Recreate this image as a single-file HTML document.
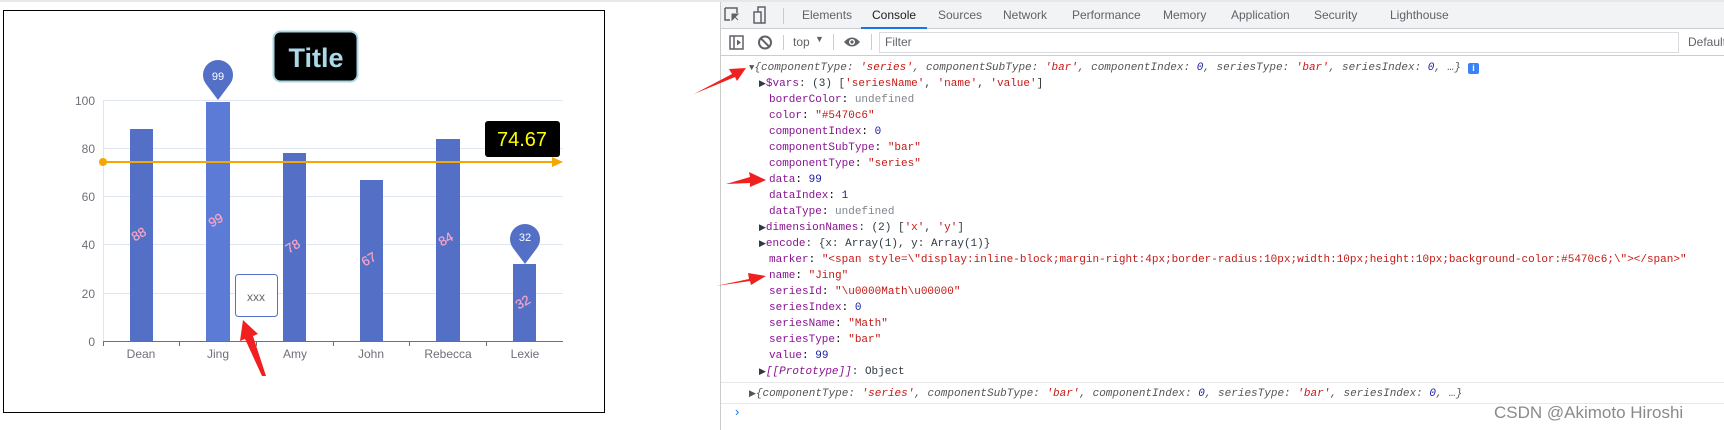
<!DOCTYPE html>
<html><head><meta charset="utf-8"><style>
*{margin:0;padding:0;box-sizing:border-box}
body{width:1724px;height:430px;background:#fff;position:relative;overflow:hidden;font-family:"Liberation Sans",sans-serif}
.a{position:absolute;white-space:nowrap}
.mono{font-family:"Liberation Mono",monospace;font-size:11px;line-height:16px}
.k{color:#881391}.s{color:#c41a16}.n{color:#1a1aa6}.u{color:#80868b}.g{color:#303942}
.tab{position:absolute;top:8px;font-size:12px;color:#5f6368}
</style></head><body>
<div class="a" style="left:0;top:0;width:1724px;height:2px;background:#e8e8e8"></div>
<svg class="a" style="left:0;top:0" width="720" height="430">
 <rect x="3.5" y="10.5" width="601" height="402" fill="#fff" stroke="#000"/>
 <g stroke="#e0e6f1" stroke-width="1">
  <line x1="103" x2="563" y1="100.5" y2="100.5"/><line x1="103" x2="563" y1="148.5" y2="148.5"/>
  <line x1="103" x2="563" y1="196.5" y2="196.5"/><line x1="103" x2="563" y1="244.5" y2="244.5"/>
  <line x1="103" x2="563" y1="293.5" y2="293.5"/><line x1="103.5" x2="103.5" y1="100" y2="341"/>
 </g>
 <g font-size="12" fill="#6e7079" text-anchor="end">
  <text x="95" y="105">100</text><text x="95" y="153">80</text><text x="95" y="201">60</text>
  <text x="95" y="249">40</text><text x="95" y="298">20</text><text x="95" y="346">0</text>
 </g>
 <g fill="#5470c6">
  <rect x="130" y="129" width="23" height="212"/><rect x="206" y="102" width="24" height="239" fill="#5b7bd6"/>
  <rect x="283" y="153" width="23" height="188"/><rect x="360" y="180" width="23" height="161"/>
  <rect x="436" y="139" width="24" height="202"/><rect x="513" y="264" width="23" height="77"/>
 </g>
 <line x1="103" x2="563" y1="341.5" y2="341.5" stroke="#6e7079"/>
 <g stroke="#6e7079"><line x1="103.5" x2="103.5" y1="341" y2="346"/><line x1="179.5" x2="179.5" y1="341" y2="346"/><line x1="256.5" x2="256.5" y1="341" y2="346"/><line x1="333.5" x2="333.5" y1="341" y2="346"/><line x1="409.5" x2="409.5" y1="341" y2="346"/><line x1="486.5" x2="486.5" y1="341" y2="346"/></g>
 <g font-size="12" fill="#6e7079" text-anchor="middle">
  <text x="141" y="358">Dean</text><text x="218" y="358">Jing</text><text x="295" y="358">Amy</text>
  <text x="371" y="358">John</text><text x="448" y="358">Rebecca</text><text x="525" y="358">Lexie</text>
 </g>
 <g font-size="13" fill="#f5a3c3" text-anchor="middle" stroke="#f5a3c3" stroke-width="0.3">
  <text transform="translate(141,238) rotate(-30)">88</text><text transform="translate(218,224) rotate(-30)">99</text>
  <text transform="translate(295,250) rotate(-30)">78</text><text transform="translate(371,263) rotate(-30)">67</text>
  <text transform="translate(448,243) rotate(-30)">84</text><text transform="translate(525,306) rotate(-30)">32</text>
 </g>
 <line x1="103" x2="560" y1="162" y2="162" stroke="#f5a700" stroke-width="2"/>
 <circle cx="103" cy="162" r="4" fill="#f5a700"/>
 <path d="M552 157 L563 162 L552 167 Z" fill="#f5a700"/>
 <rect x="485" y="121" width="75" height="36" rx="3" fill="#000"/>
 <text x="522" y="146" font-size="20" fill="#ffff00" text-anchor="middle">74.67</text>
 <path d="M218 100 L206 84 A15 15 0 1 1 230 84 Z" fill="#5470c6"/>
 <text x="218" y="80" font-size="11" fill="#fff" text-anchor="middle">99</text>
 <path d="M525 264 L513 248 A15 15 0 1 1 537 248 Z" fill="#5470c6"/>
 <text x="525" y="241" font-size="11" fill="#fff" text-anchor="middle">32</text>
 <rect x="273.5" y="31.5" width="84" height="50" rx="7" fill="#000" stroke="#a9d6e5" stroke-width="2"/>
 <text x="316" y="67" font-size="27" font-weight="bold" fill="#add8e6" text-anchor="middle">Title</text>
 <rect x="235.5" y="274.5" width="42" height="42" rx="3" fill="#fff" stroke="#5470c6"/>
 <text x="256" y="301" font-size="12" fill="#666" text-anchor="middle">xxx</text>
 <path d="M243 320 L258 334 L253 336 L266 376 L262 376 L245 339 L240 341 Z" fill="#f02020"/>
</svg>
<!-- devtools -->
<div class="a" style="left:720px;top:2px;width:1004px;height:428px;border-left:1px solid #ccc"></div>
<div class="a" style="left:721px;top:2px;width:1003px;height:27px;background:#f1f3f4;border-bottom:1px solid #cbcdd1"></div>
<svg class="a" style="left:724px;top:6px" width="50" height="20"><path d="M1 2h12v5M1 2v12h5" fill="none" stroke="#5f6368" stroke-width="1.5"/><path d="M8 8 L14 14 M8 8 l0 6 l6-6z" stroke="#5f6368" fill="#5f6368"/><rect x="30" y="6" width="7" height="11" fill="none" stroke="#5f6368" stroke-width="1.5"/><path d="M34 6 V1 h7 v16 h-4" fill="none" stroke="#5f6368" stroke-width="1.5"/></svg>
<div class="a" style="left:783px;top:8px;width:1px;height:16px;background:#ccc"></div>
<div class="tab" style="left:802px">Elements</div>
<div class="tab" style="left:872px;color:#202124">Console</div>
<div class="a" style="left:861px;top:27px;width:66px;height:2px;background:#1a73e8"></div>
<div class="tab" style="left:938px">Sources</div>
<div class="tab" style="left:1003px">Network</div>
<div class="tab" style="left:1072px">Performance</div>
<div class="tab" style="left:1163px">Memory</div>
<div class="tab" style="left:1231px">Application</div>
<div class="tab" style="left:1314px">Security</div>
<div class="tab" style="left:1390px">Lighthouse</div>
<div class="a" style="left:721px;top:29px;width:1003px;height:27px;background:#fff;border-bottom:1px solid #cbcdd1"></div>
<svg class="a" style="left:728px;top:33px" width="120" height="20"><rect x="2" y="3" width="13" height="13" fill="none" stroke="#5f6368" stroke-width="1.5"/><line x1="6" y1="3" x2="6" y2="16" stroke="#5f6368" stroke-width="1.5"/><path d="M9 6.5 L13 9.5 L9 12.5z" fill="#5f6368"/><circle cx="37" cy="9.5" r="6" fill="none" stroke="#5f6368" stroke-width="2"/><line x1="33" y1="5.5" x2="41" y2="13.5" stroke="#5f6368" stroke-width="2"/><line x1="55.5" y1="2" x2="55.5" y2="17" stroke="#ccc"/></svg>
<div class="a" style="left:793px;top:35px;font-size:12px;color:#5f6368">top</div>
<div class="a" style="left:815px;top:34px;font-size:9px;color:#5f6368">▼</div>
<div class="a" style="left:833px;top:34px;width:1px;height:16px;background:#ccc"></div>
<svg class="a" style="left:843px;top:35px" width="20" height="14"><path d="M1 7 Q9 -2 17 7 Q9 16 1 7Z" fill="#5f6368"/><circle cx="9" cy="7" r="3" fill="#fff"/><circle cx="9" cy="7" r="1.6" fill="#5f6368"/></svg>
<div class="a" style="left:871px;top:34px;width:1px;height:16px;background:#ccc"></div>
<div class="a" style="left:879px;top:32px;width:800px;height:21px;border:1px solid #dadce0"></div>
<div class="a" style="left:885px;top:35px;font-size:12px;color:#5f6368">Filter</div>
<div class="a" style="left:1688px;top:35px;font-size:12px;color:#5f6368">Default</div>

<div class="a mono" style="left:749px;top:60px;font-style:italic;color:#555"><span style="font-style:normal;font-size:9px">▼</span>{componentType: <span class="s">'series'</span>, componentSubType: <span class="s">'bar'</span>, componentIndex: <span class="n">0</span>, seriesType: <span class="s">'bar'</span>, seriesIndex: <span class="n">0</span>, …}</div>
<div class="a" style="left:1468px;top:63px;width:11px;height:11px;border-radius:2px;background:#3b82f6;color:#fff;font-size:9px;font-weight:bold;text-align:center;line-height:11px">i</div>
<div class="a mono" style="left:759px;top:76px;color:#303942"><span style="font-size:9px">▶</span><span class="k">$vars</span>: (3) [<span class="s">'seriesName'</span>, <span class="s">'name'</span>, <span class="s">'value'</span>]</div>
<div class="a mono" style="left:769px;top:92px"><span class="k">borderColor</span>: <span class="u">undefined</span><br><span class="k">color</span>: <span class="s">"#5470c6"</span><br><span class="k">componentIndex</span>: <span class="n">0</span><br><span class="k">componentSubType</span>: <span class="s">"bar"</span><br><span class="k">componentType</span>: <span class="s">"series"</span><br><span class="k">data</span>: <span class="n">99</span><br><span class="k">dataIndex</span>: <span class="n">1</span><br><span class="k">dataType</span>: <span class="u">undefined</span></div>
<div class="a mono g" style="left:759px;top:220px"><span style="font-size:9px">▶</span><span class="k">dimensionNames</span>: (2) [<span class="s">'x'</span>, <span class="s">'y'</span>]<br><span style="font-size:9px">▶</span><span class="k">encode</span>: {x: Array(1), y: Array(1)}</div>
<div class="a mono" style="left:769px;top:252px"><span class="k">marker</span>: <span class="s">"&lt;span style=\"display:inline-block;margin-right:4px;border-radius:10px;width:10px;height:10px;background-color:#5470c6;\"&gt;&lt;/span&gt;"</span><br><span class="k">name</span>: <span class="s">"Jing"</span><br><span class="k">seriesId</span>: <span class="s">"\u0000Math\u00000"</span><br><span class="k">seriesIndex</span>: <span class="n">0</span><br><span class="k">seriesName</span>: <span class="s">"Math"</span><br><span class="k">seriesType</span>: <span class="s">"bar"</span><br><span class="k">value</span>: <span class="n">99</span></div>
<div class="a mono g" style="left:759px;top:364px"><span style="font-size:9px">▶</span><i class="k">[[Prototype]]</i>: Object</div>
<div class="a" style="left:721px;top:382px;width:1003px;height:1px;background:#e8e8e8"></div>
<div class="a mono" style="left:749px;top:386px;font-style:italic;color:#555"><span style="font-style:normal;font-size:9px">▶</span>{componentType: <span class="s">'series'</span>, componentSubType: <span class="s">'bar'</span>, componentIndex: <span class="n">0</span>, seriesType: <span class="s">'bar'</span>, seriesIndex: <span class="n">0</span>, …}</div>
<div class="a" style="left:721px;top:403px;width:1003px;height:1px;background:#e8e8e8"></div>
<div class="a" style="left:735px;top:404px;font-size:13px;color:#1a73e8">›</div>
<div class="a" style="left:1494px;top:403px;font-size:17px;color:#8a8a8a">CSDN @Akimoto Hiroshi</div>
<svg class="a" style="left:640px;top:50px" width="140" height="250">
 <path d="M54 44 L92 24 L89 19 L106 18 L97 31 L95 27 Z" fill="#f02020"/>
 <path d="M86 134 L110 127 L109 122 L126 130 L110 137 L110 133 Z" fill="#f02020"/>
 <path d="M76 236 L109 229 L108 223 L126 226 L111 235 L110 231 Z" fill="#f02020"/>
</svg>
</body></html>
